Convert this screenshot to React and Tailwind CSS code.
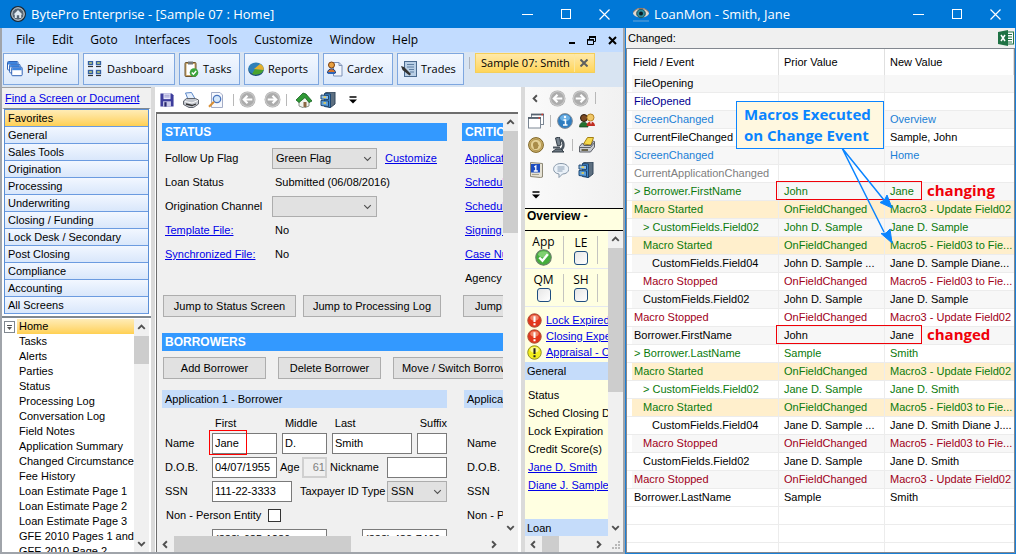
import { useState } from "react";

const ui = "font-['Liberation_Sans',Arial,sans-serif]";
const segoe = "font-['Open_Sans','Noto_Sans',sans-serif]";

const menus = ["File", "Edit", "Goto", "Interfaces", "Tools", "Customize", "Window", "Help"];

const categories = [
    "Favorites",
    "General",
    "Sales Tools",
    "Origination",
    "Processing",
    "Underwriting",
    "Closing / Funding",
    "Lock Desk / Secondary",
    "Post Closing",
    "Compliance",
    "Accounting",
    "All Screens",
];

const screens = [
    "Home",
    "Tasks",
    "Alerts",
    "Parties",
    "Status",
    "Processing Log",
    "Conversation Log",
    "Field Notes",
    "Application Summary",
    "Changed Circumstance",
    "Fee History",
    "Loan Estimate Page 1",
    "Loan Estimate Page 2",
    "Loan Estimate Page 3",
    "GFE 2010 Pages 1 and",
    "GFE 2010 Page 2",
];

// [indent, tone, field, prior, next]
const events = [
    [0, "black", "FileOpening", "", ""],
    [0, "navy", "FileOpened", "", ""],
    [0, "blue", "ScreenChanged", "", "Overview"],
    [0, "black", "CurrentFileChanged", "", "Sample, John"],
    [0, "blue", "ScreenChanged", "", "Home"],
    [0, "gray", "CurrentApplicationChanged", "", ""],
    [0, "green", "> Borrower.FirstName", "John", "Jane"],
    [0, "macro", "Macro Started", "OnFieldChanged", "Macro3 - Update Field02"],
    [1, "green", "> CustomFields.Field02", "John D. Sample", "Jane D. Sample"],
    [1, "macro", "Macro Started", "OnFieldChanged", "Macro5 - Field03 to Fie..."],
    [2, "black", "CustomFields.Field04", "John D. Sample ...", "Jane D. Sample Diane..."],
    [1, "red", "Macro Stopped", "OnFieldChanged", "Macro5 - Field03 to Fie..."],
    [1, "black", "CustomFields.Field02", "John D. Sample", "Jane D. Sample"],
    [0, "red", "Macro Stopped", "OnFieldChanged", "Macro3 - Update Field02"],
    [0, "black", "Borrower.FirstName", "John", "Jane"],
    [0, "green", "> Borrower.LastName", "Sample", "Smith"],
    [0, "macro", "Macro Started", "OnFieldChanged", "Macro3 - Update Field02"],
    [1, "green", "> CustomFields.Field02", "Jane D. Sample", "Jane D. Smith"],
    [1, "macro", "Macro Started", "OnFieldChanged", "Macro5 - Field03 to Fie..."],
    [2, "black", "CustomFields.Field04", "Jane D. Sample ...", "Jane D. Smith Diane J...."],
    [1, "red", "Macro Stopped", "OnFieldChanged", "Macro5 - Field03 to Fie..."],
    [1, "black", "CustomFields.Field02", "Jane D. Sample", "Jane D. Smith"],
    [0, "red", "Macro Stopped", "OnFieldChanged", "Macro3 - Update Field02"],
    [0, "black", "Borrower.LastName", "Sample", "Smith"],
    [0, "blank", "", "", ""],
    [0, "blank", "", "", ""],
    [0, "blank", "", "", ""],
];

const tones = {
    black: "text-black",
    navy: "text-[#000090]",
    blue: "text-[#1a7fd6]",
    gray: "text-[#808080]",
    green: "text-[#0b7a0b]",
    macro: "text-[#0b7a0b]",
    red: "text-[#a00018]",
    blank: "",
};

const indents = ["pl-[2px]", "pl-[11px]", "pl-[20px]"];

/* ---------- Icons ---------- */

function Svg({ size = 16, children }) {
    return (
        <svg width={size} height={size} viewBox="0 0 16 16" fill="none" className="shrink-0" aria-hidden="true">
            {children}
        </svg>
    );
}

function AppIcon() {
    return (
        <Svg>
            <circle cx="8" cy="8" r="7.4" fill="#566573" stroke="#1c2833" strokeWidth="1.2" />
            <circle cx="8" cy="8" r="6.2" stroke="#cfd8dc" strokeWidth="1" />
            <path d="M3.5 8.5 8 4l4.5 4.5h-1.3V12H9.2V9.2H6.8V12h-2V8.5z" fill="#dfeaf2" />
        </Svg>
    );
}

function EyeIcon() {
    return (
        <Svg>
            <path d="M0 7.5C2 0 14 0 16 7.500 14 13 2 13 0 7.500z" fill="#e4d9cd" />
            <circle cx="8" cy="7.500" r="4.300" fill="#2c8a9c" stroke="#1b4f5c" />
            <circle cx="8" cy="7.500" r="2" fill="#081c24" />
            <path d="M0 6.500C3 1 13 1 16 6.500" stroke="#8d6f5c" strokeWidth="1" />
            <path d="M0 15h16" stroke="#6ba6d8" />
        </Svg>
    );
}

function PipelineIcon() {
    return (
        <Svg>
            {[0, 3, 6].map((o) => (
                <g key={o}>
                    <rect x={0.5 + o * 0.7} y={0.5 + o * 0.95} width="10.500" height="8.500" rx="1" fill="#fff" stroke="#2f62b5" />
                    <rect x={1 + o * 0.7} y={1 + o * 0.95} width="9.500" height="2.500" fill="#3f86e0" />
                </g>
            ))}
        </Svg>
    );
}

function DashboardIcon() {
    return (
        <Svg>
            {[2, 10].map((x) =>
                [0, 9].map((y) => (
                    <g key={x + "-" + y}>
                        <rect x={x - 0.5} y={y + 0.5} width="4" height="3" fill="#b9c77a" stroke="#345fa0" strokeWidth="1.300" />
                        <path d={`M${x - 1} ${y + 5.5}h5`} stroke="#333" strokeWidth="1.200" />
                    </g>
                ))
            )}
        </Svg>
    );
}

function TasksIcon() {
    return (
        <Svg>
            <rect x="2" y="1.500" width="11" height="14" rx="1" fill="#c8a468" stroke="#6b5430" />
            <rect x="3.500" y="3" width="8" height="11" fill="#fff" />
            <rect x="5" y="0.500" width="5" height="3" fill="#777" />
            <circle cx="11" cy="11.500" r="4.300" fill="#3da53d" />
            <path d="m8.800 11.500 1.600 1.700 2.800-3.200" stroke="#fff" strokeWidth="1.400" />
        </Svg>
    );
}

function ReportsIcon() {
    return (
        <Svg>
            <ellipse cx="8" cy="9" rx="7.700" ry="6" fill="#1c4c78" />
            <ellipse cx="8" cy="7.500" rx="7.700" ry="6" fill="#2f7fb8" />
            <path d="M7 8 4 13c3.500 1.500 10 .5 11.500-4z" fill="#4aa32c" />
            <path d="m6 8 9.500 1c1-2-1-5-3.500-6z" fill="#e3b02c" />
        </Svg>
    );
}

function CardexIcon() {
    return (
        <Svg>
            <path d="M6.500 1.500h5.500l3 3v10.500h-8.500z" fill="#f2f6fc" stroke="#7f93b8" />
            <path d="M12 1.500v3h3" stroke="#7f93b8" />
            <circle cx="4.500" cy="4" r="3" fill="#e8a040" stroke="#7c3f10" />
            <path d="M0.500 12c0-5.500 8-5.500 8 0z" fill="#d8752a" stroke="#1d3c78" />
            <path d="M1 12h7" stroke="#2f66b8" strokeWidth="2" />
        </Svg>
    );
}

function TradesIcon() {
    return (
        <Svg>
            <rect x="3.500" y="0.500" width="12" height="15" fill="#b9cfe6" stroke="#4b6a8e" />
            <path d="M6 3.500h7M6 6h7M8 8.500h5M9 11h4" stroke="#5f7fa2" />
            <path d="m0 5 3 1 7 7-1.500 1.500L1.500 9z" fill="#333" />
        </Svg>
    );
}

function SaveIcon() {
    return (
        <Svg size={14}>
            <path d="M0.500 0.500h13l2 2v13h-15z" fill="#3d3d9c" />
            <rect x="4" y="0.500" width="8" height="6.500" fill="#e8e8fa" />
            <path d="M5 2.500h6M5 4.500h6" stroke="#8a8ac8" />
            <rect x="3.500" y="9.500" width="9" height="6" fill="#c8c8e8" />
            <rect x="5" y="10.500" width="2.500" height="5" fill="#26266c" />
        </Svg>
    );
}

function PrinterIcon() {
    return (
        <Svg>
            <path d="m2.500 1 6-.5 4 7-7 1z" fill="#e6f0fd" stroke="#5c88c8" />
            <path d="m0.500 9 3-2.500h9l3 1.500v4l-5 3.500H6l-5.500-3z" fill="#c3c7ce" stroke="#60656e" />
            <path d="M2 9.500 9 11l6-2.500" stroke="#fafafa" />
            <path d="m3 12 6 1.500 4-1.500" stroke="#333" strokeWidth="1.300" />
        </Svg>
    );
}

function PreviewIcon() {
    return (
        <Svg>
            <path d="M3.500 0.500h8.500l2.500 2.500v12.500h-11z" fill="#f6f8fd" stroke="#a3acc6" />
            <circle cx="9" cy="7" r="3.700" fill="#d5e8fb" stroke="#4b75bd" strokeWidth="1.300" />
            <path d="m6 9.800-5 5" stroke="#d89038" strokeWidth="2.200" />
        </Svg>
    );
}

function RoundArrow({ flip }) {
    return (
        <Svg size={17}>
            <circle cx="8" cy="8" r="7.500" fill="#acacac" />
            <circle cx="8" cy="8" r="6.600" stroke="#c9c9c9" />
            <path
                d={flip ? "M3.500 8h8M8 4.500 11.500 8 8 11.500" : "M12.500 8h-8M8 4.500 4.500 8 8 11.500"}
                stroke="#fff"
                strokeWidth="2"
            />
        </Svg>
    );
}

function HouseIcon() {
    return (
        <Svg>
            <path d="M3 8v6l5 2 5-2V8L8 4z" fill="#f1f5ef" stroke="#8a938a" />
            <path d="M0 8 7 1l3 1 6 7-3 1.500-4-5-6 5z" fill="#2f9a36" stroke="#166020" strokeWidth="0.800" />
            <rect x="7.500" y="10" width="3" height="5" fill="#8c6844" />
        </Svg>
    );
}

function CabinetIcon() {
    return (
        <Svg>
            <path d="m5 1 4-1h6v12l-4.500 3.500H9z" fill="#5d6f80" stroke="#33475a" />
            <path d="m4.500 1.500 6 .5v13.500l-6-1z" fill="#3f86c8" stroke="#1e4670" />
            <path d="m1 3 7.500.5v4L1 7z" fill="#8cc0ee" stroke="#1e4670" />
            <path d="m1 8.500 7.500.5v5.500L1 13.500z" fill="#5ba0de" stroke="#1e4670" />
            <path d="M3.500 5.200h2.500M3.500 11h2.500" stroke="#f0cf4c" strokeWidth="1.400" />
        </Svg>
    );
}

function WindowsIcon() {
    return (
        <Svg>
            <rect x="3.500" y="1.500" width="12" height="10" fill="#fff" stroke="#7c8794" />
            <path d="M3 1.500h13" stroke="#55616e" strokeWidth="1.800" />
            <rect x="0.500" y="4.500" width="12" height="10.500" fill="#fff" stroke="#7c8794" />
            <path d="M0 5h13" stroke="#55616e" strokeWidth="1.800" />
            <path d="M13.500 1.500h1.500M10.500 5h1.500" stroke="#e03b2c" strokeWidth="1.500" />
        </Svg>
    );
}

function InfoIcon() {
    return (
        <Svg>
            <circle cx="8" cy="8" r="7.400" fill="#2f7dc0" stroke="#878f98" />
            <ellipse cx="8" cy="5" rx="5" ry="3.300" fill="#6bb0e4" />
            <path d="M6.500 7h2v5M6 12h4.500" stroke="#fff" strokeWidth="1.500" />
            <circle cx="8" cy="4" r="1.200" fill="#fff" />
        </Svg>
    );
}

function PeopleIcon() {
    return (
        <Svg>
            <circle cx="5" cy="5" r="3.500" fill="#7c4a22" stroke="#2a1a0c" />
            <path d="M0.500 14c0-6.500 8.500-6.500 8.500 0z" fill="#23722f" stroke="#123f1a" strokeWidth="0.700" />
            <circle cx="11.500" cy="4.500" r="3.500" fill="#f0c766" stroke="#b58428" />
            <path d="M7.500 13c0-6 8.500-6 8.500 0z" fill="#c02d22" />
            <path d="M11 8.500h2l-1 3z" fill="#fff" />
        </Svg>
    );
}

function CoinIcon() {
    return (
        <Svg>
            <circle cx="8" cy="8" r="7.400" fill="#cdb069" stroke="#7d6425" />
            <circle cx="8" cy="8" r="5.600" fill="#e5d196" stroke="#a68a42" strokeWidth="0.700" />
            <path d="M6 12c0-2-1.500-3-1-5 .6-3 5-3 5 0l1 2-1 .5v1.500l-1.500 1z" fill="#a98c48" />
        </Svg>
    );
}

function MicroscopeIcon() {
    return (
        <Svg>
            <path d="m5.500 1 4-1 1.500 8-3.500 1z" fill="#77838e" stroke="#343e47" />
            <path d="M10.500 2.500c4 2 4 8.500 0 10.500" stroke="#4a545e" strokeWidth="2.400" />
            <path d="M3 10.500h7" stroke="#4a545e" strokeWidth="2" />
            <path d="M2 15h12l-3-3H6z" fill="#69757f" stroke="#343e47" />
        </Svg>
    );
}

function FaxIcon() {
    return (
        <Svg>
            <path d="m4.500 7 4-6.500h6L12 8z" fill="#f5d94c" stroke="#a37e14" />
            <path d="m0.500 9.500 3-3.500 1.500 2.500h7l2.500-4.500 1 .5v5.500l-4 5H0.500z" fill="#c9ccd1" stroke="#5c6068" />
            <path d="M1 10.500h10.500l4-5" stroke="#5c6068" />
            <path d="M2.500 13h6.500" stroke="#4d4420" strokeWidth="1.500" />
        </Svg>
    );
}

function CalendarIcon() {
    return (
        <Svg>
            <path d="m2.500 0.500 12 1v13.500l-2 .5-10-1z" fill="#e6e2d4" stroke="#8d8876" />
            <rect x="3" y="2" width="9" height="8.500" fill="#1d4cc0" />
            <path d="m6.300 5 1.500-1v5M5.800 9h4" stroke="#fff" strokeWidth="1.300" />
            <path d="M4 12.500h7" stroke="#aaa48e" />
        </Svg>
    );
}

function ChatIcon() {
    return (
        <Svg>
            <path d="M8 1.500c10 0 10 10.500 1.500 10.500L6 15.500V12C-2 11-1 1.500 8 1.500z" fill="#eaf1f8" stroke="#8797a8" />
            <path d="M4.500 5h7M4.500 7h7M4.500 9h5" stroke="#8da0b4" />
        </Svg>
    );
}

function ExcelIcon() {
    return (
        <Svg>
            <rect x="8" y="2" width="7.500" height="12" fill="#fff" stroke="#1f7244" />
            <path d="M10 4.500h4M10 7h4M10 9.500h4M10 12h4" stroke="#1f7244" strokeWidth="1.200" />
            <path d="M0 2 10 0v16L0 14z" fill="#1f7244" />
            <path d="m3 5 4 6M7 5l-4 6" stroke="#fff" strokeWidth="1.500" />
        </Svg>
    );
}

function AlertIcon({ warn }) {
    return (
        <Svg size={15}>
            <circle cx="8" cy="8" r="7.200" fill={warn ? "#f2ee1c" : "#e2371c"} stroke={warn ? "#8b8820" : "#a8523c"} />
            <ellipse cx="8" cy="5" rx="4.500" ry="3" fill={warn ? "#fbfa90" : "#f08468"} />
            <path d="M8 3.500v6M8 11v2" stroke={warn ? "#222" : "#fff"} strokeWidth="2.200" />
        </Svg>
    );
}

function CheckIcon() {
    return (
        <Svg size={17}>
            <circle cx="8" cy="8" r="7.300" fill="#45ad3c" stroke="#6c7f6c" />
            <ellipse cx="8" cy="5" rx="5" ry="3" fill="#7fd070" />
            <path d="m4 8 3 3 5-6" stroke="#fff" strokeWidth="2.200" />
        </Svg>
    );
}

const chevrons = {
    up: "m4.500 9.500 3.500-3.500 3.500 3.500",
    down: "m4.500 6.500 3.500 3.500 3.500-3.500",
    left: "m9.500 4.500-3.500 3.500 3.500 3.500",
    right: "m6.500 4.500 3.500 3.500-3.500 3.500",
};

function Chevron({ dir, thin }) {
    return (
        <Svg size={15}>
            <path d={chevrons[dir]} stroke="#505050" strokeWidth={thin ? 1.2 : 2} />
        </Svg>
    );
}

function Overflow() {
    return (
        <svg width="8" height="8" viewBox="0 0 8 8" aria-hidden="true">
            <path d="M0.500 1h7" stroke="#000" strokeWidth="1.500" />
            <path d="M0 3.500h8l-4 4z" fill="#000" />
        </svg>
    );
}

/* ---------- Shared pieces ---------- */

function Separator() {
    return <span className="h-3 w-px bg-[#b8b8b8]" />;
}

function IconButton({ label, children }) {
    return (
        <button type="button" aria-label={label} className="flex items-center justify-center">
            {children}
        </button>
    );
}

function Link({ children }) {
    return (
        <a href="#" className="whitespace-nowrap text-[#0000e8] underline">
            {children}
        </a>
    );
}

function VScroll({ thumb }) {
    return (
        <div className="flex w-[15px] shrink-0 flex-col bg-[#f0f0f0]">
            <div className="flex h-[17px] items-center">
                <Chevron dir="up" />
            </div>
            <div className={"bg-[#cdcdcd] " + thumb} />
            <div className="flex-1" />
            <div className="flex h-[17px] items-center">
                <Chevron dir="down" />
            </div>
        </div>
    );
}

function HScroll({ thumb, children }) {
    return (
        <div className="flex h-4 shrink-0 items-center bg-[#f0f0f0]">
            <div className="flex w-[17px] justify-center">
                <Chevron dir="left" />
            </div>
            <div className={"h-full bg-[#cdcdcd] " + thumb} />
            <div className="flex-1" />
            <div className="flex w-[19px] justify-center">
                <Chevron dir="right" />
            </div>
            {children}
        </div>
    );
}

function WindowButtons() {
    return (
        <div className="ml-auto flex items-center gap-7 pr-[15px] text-white">
            <button type="button" aria-label="Minimize" className="flex h-3 w-[11px] items-center">
                <span className="h-px w-full bg-white" />
            </button>
            <button type="button" aria-label="Maximize" className="h-[10px] w-[10px] border border-white" />
            <button type="button" aria-label="Close">
                <svg width="11" height="11" viewBox="0 0 11 11" aria-hidden="true">
                    <path d="m0.500 0.500 10 10M10.500 0.500l-10 10" stroke="#fff" strokeWidth="1.200" />
                </svg>
            </button>
        </div>
    );
}

function PushButton({ width, children }) {
    return (
        <button
            type="button"
            className={"h-[22px] shrink-0 whitespace-nowrap border border-[#adadad] bg-[#e1e1e1] text-center " + width}
        >
            {children}
        </button>
    );
}

function TextBox({ label, width, value = "", id }) {
    return (
        <input
            id={id}
            type="text"
            aria-label={label}
            defaultValue={value}
            className={"h-[21px] shrink-0 border border-[#7a7a7a] bg-white px-[2px] text-black outline-none " + width}
        />
    );
}

function Combo({ id, label, width, options }) {
    return (
        <span className={"relative h-[21px] shrink-0 " + width}>
            <select
                id={id}
                aria-label={label}
                className="h-full w-full appearance-none border border-[#adadad] bg-[#e1e1e1] pl-[3px] outline-none"
            >
                {options.map((o) => (
                    <option key={o}>{o}</option>
                ))}
            </select>
            <span className="pointer-events-none absolute right-0.5 top-[3px]">
                <Chevron dir="down" thin />
            </span>
        </span>
    );
}

/* ---------- BytePro window ---------- */

const modules = [
    ["Pipeline", PipelineIcon, "w-[76px]"],
    ["Dashboard", DashboardIcon, "w-[92px]"],
    ["Tasks", TasksIcon, "w-[61px]"],
    ["Reports", ReportsIcon, "w-[75px]"],
    ["Cardex", CardexIcon, "w-[70px]"],
    ["Trades", TradesIcon, "w-[67px]"],
];

function MenuBar() {
    return (
        <nav className={"flex h-6 shrink-0 items-center gap-[17px] bg-[#c2dcff] pl-[14px] text-[12px] " + segoe}>
            {menus.map((m) => (
                <button key={m} type="button">
                    {m}
                </button>
            ))}
            <div className="ml-auto flex items-center gap-3 pr-[6px]">
                <button type="button" aria-label="Minimize document" className="flex h-2 w-[6px] items-end">
                    <span className="h-0.5 w-full bg-black" />
                </button>
                <button type="button" aria-label="Restore document">
                    <svg width="9" height="9" viewBox="0 0 9 9" fill="none" stroke="#000" aria-hidden="true">
                        <path d="M2.500 3V.5h6v5H6.500" />
                        <path d="M2 1h7" strokeWidth="2" />
                        <path d="M.5 3.500h6v5h-6z" />
                        <path d="M0 4h7" strokeWidth="1.500" />
                    </svg>
                </button>
                <button type="button" aria-label="Close document">
                    <svg width="9" height="9" viewBox="0 0 9 9" aria-hidden="true">
                        <path d="m1 1 7 7M8 1 1 8" stroke="#000" strokeWidth="2" />
                    </svg>
                </button>
            </div>
        </nav>
    );
}

function ModuleBar() {
    return (
        <div className={"flex h-[35px] shrink-0 items-start gap-1 bg-[#d8e4f2] pl-px pt-px text-[11px] " + segoe}>
            {modules.map(([name, Icon, width]) => (
                <button
                    key={name}
                    type="button"
                    className={
                        "flex h-8 shrink-0 items-center gap-1 border border-[#7ea7e0] bg-gradient-to-b from-[#f3f8ff] to-[#dbe9fb] pl-[3px] " +
                        width
                    }
                >
                    <Icon />
                    {name}
                </button>
            ))}
            <span className="mx-px mt-1 h-3 w-px bg-[#b0b6c0]" />
            <div className="flex h-5 shrink-0 items-center border border-[#f5cf5a] bg-gradient-to-b from-[#ffe9a8] to-[#ffd558]">
                <span className="whitespace-nowrap pl-[5px] pr-1">Sample 07: Smith</span>
                <button
                    type="button"
                    aria-label="Close tab"
                    className="flex h-full w-5 items-center justify-center border-l border-[#fbe7a0]"
                >
                    <svg width="8" height="8" viewBox="0 0 8 8" aria-hidden="true">
                        <path d="m0.500 0.500 7 7M7.500 0.500l-7 7" stroke="#5f5f5f" strokeWidth="2" />
                    </svg>
                </button>
            </div>
        </div>
    );
}

function Sidebar() {
    const [active, setActive] = useState("Favorites");
    return (
        <aside className="flex w-[149px] shrink-0 flex-col border-t border-[#a0a0a0] bg-[#f0f0f0]">
            <div className="flex h-5 shrink-0 items-center pl-[3px]">
                <Link>Find a Screen or Document</Link>
            </div>
            <div className="border-2 border-t border-white border-t-[#808890] bg-white">
                <ul className="border-x border-t border-[#5b8fd6]">
                    {categories.map((c) => (
                        <li key={c}>
                            <button
                                type="button"
                                onClick={() => setActive(c)}
                                className={
                                    "flex h-[17px] w-full items-center border-b border-[#6b9be0] bg-gradient-to-b pl-[3px] " +
                                    (c === active ? "from-[#ffecb5] to-[#ffd050]" : "from-[#f2f7ff] to-[#d9e7fb]")
                                }
                            >
                                {c}
                            </button>
                        </li>
                    ))}
                </ul>
            </div>
            <div className="flex min-h-0 flex-1 border-t-2 border-[#808890] bg-white pr-0.5 pt-px">
                <button
                    type="button"
                    aria-label="Collapse"
                    className="ml-0.5 mt-0.5 flex h-3 w-[11px] shrink-0 items-center justify-center border border-[#808890]"
                >
                    <svg width="5" height="5" viewBox="0 0 5 5" aria-hidden="true">
                        <path d="M0 .5h5" stroke="#555" />
                        <path d="M0 2h5L2.500 5z" fill="#555" />
                    </svg>
                </button>
                <ul className="ml-0.5 min-w-0 flex-1 overflow-hidden">
                    {screens.map((s, i) => (
                        <li
                            key={s}
                            className={
                                "h-[15px] whitespace-nowrap pl-[2px] leading-[15px] " +
                                (i === 0 ? "bg-gradient-to-b from-[#ffecb5] to-[#ffd050]" : "")
                            }
                        >
                            {s}
                        </li>
                    ))}
                </ul>
                <VScroll thumb="h-7" />
            </div>
        </aside>
    );
}

function SectionBar({ children }) {
    return <h2 className="h-[18px] bg-[#3399ff] pl-[3px] text-[12px] font-bold leading-[18px] text-white">{children}</h2>;
}

function StatusColumn() {
    return (
        <section className="w-[285px] shrink-0">
            <SectionBar>STATUS</SectionBar>
            <div className="mt-[5px] pb-[29px]">
                <div className="flex h-6 items-center">
                    <label htmlFor="flag" className="w-[110px] pl-[3px]">
                        Follow Up Flag
                    </label>
                    <Combo id="flag" width="w-[105px]" options={["Green Flag"]} />
                    <span className="ml-2">
                        <Link>Customize</Link>
                    </span>
                </div>
                <div className="flex h-6 items-center">
                    <span className="w-[113px] pl-[3px]">Loan Status</span>
                    <span>Submitted (06/08/2016)</span>
                </div>
                <div className="flex h-6 items-center">
                    <label htmlFor="channel" className="w-[110px] pl-[3px]">
                        Origination Channel
                    </label>
                    <Combo id="channel" width="w-[105px]" options={[""]} />
                </div>
                <div className="flex h-6 items-center">
                    <span className="w-[113px] pl-[3px]">
                        <Link>Template File:</Link>
                    </span>
                    <span>No</span>
                </div>
                <div className="flex h-6 items-center">
                    <span className="w-[113px] pl-[3px]">
                        <Link>Synchronized File:</Link>
                    </span>
                    <span>No</span>
                </div>
            </div>
            <div className="flex gap-[7px] pl-px">
                <PushButton width="w-[133px]">Jump to Status Screen</PushButton>
                <PushButton width="w-[138px]">Jump to Processing Log</PushButton>
            </div>
        </section>
    );
}

function CriticalColumn() {
    return (
        <section className="w-[285px] shrink-0">
            <SectionBar>CRITICAL DATES</SectionBar>
            <div className="mt-[5px] pb-[5px] pl-[3px]">
                {["Application Date", "Scheduled Closing", "Scheduled Funding", "Signing Date", "Case Number"].map((t) => (
                    <div key={t} className="flex h-6 items-center">
                        <Link>{t}</Link>
                    </div>
                ))}
                <div className="flex h-6 items-center">Agency Case</div>
            </div>
            <div className="pl-px">
                <PushButton width="w-[133px]">Jump to Dates Screen</PushButton>
            </div>
        </section>
    );
}

function BorrowerForm() {
    return (
        <section className="w-[285px] shrink-0">
            <h3 className="h-[18px] bg-[#c5dcfa] pl-[3px] leading-[18px]">Application 1 - Borrower</h3>
            <div className="mt-[7px] flex h-4 items-center pl-[53px]">
                <label htmlFor="first" className="w-[70px]">First</label>
                <label htmlFor="middle" className="w-[50px]">Middle</label>
                <label htmlFor="last" className="w-[85px]">Last</label>
                <label htmlFor="suffix">Suffix</label>
            </div>
            <div className="relative flex h-6 items-center gap-[5px]">
                <span className="w-[45px] pl-[3px]">Name</span>
                <TextBox id="first" width="w-[65px]" value="Jane" />
                <TextBox id="middle" width="w-[45px]" value="D." />
                <TextBox id="last" width="w-[80px]" value="Smith" />
                <TextBox id="suffix" width="w-[30px]" />
                <span className="pointer-events-none absolute -top-px left-[47px] h-[25px] w-[38px] border border-[#ff0000]" />
            </div>
            <div className="flex h-6 items-center">
                <label htmlFor="dob" className="w-[50px] pl-[3px]">D.O.B.</label>
                <TextBox id="dob" width="w-[65px]" value="04/07/1955" />
                <label htmlFor="age" className="w-[25px] pl-[3px]">Age</label>
                <input
                    id="age"
                    type="text"
                    disabled
                    defaultValue="61"
                    className="h-[21px] w-[25px] border-2 border-[#d0d0d0] bg-[#f0f0f0] text-right text-[#808080]"
                />
                <label htmlFor="nickname" className="w-[60px] pl-[3px]">Nickname</label>
                <TextBox id="nickname" width="w-[60px]" />
            </div>
            <div className="flex h-6 items-center">
                <label htmlFor="ssn" className="w-[50px] pl-[3px]">SSN</label>
                <TextBox id="ssn" width="w-[80px]" value="111-22-3333" />
                <label htmlFor="taxid" className="w-[95px] whitespace-nowrap pl-2">Taxpayer ID Type</label>
                <Combo id="taxid" width="w-[60px]" options={["SSN"]} />
            </div>
            <div className="flex h-6 items-center">
                <label htmlFor="entity" className="w-[106px] pl-1">Non - Person Entity</label>
                <input id="entity" type="checkbox" className="h-[13px] w-[13px] appearance-none border border-[#333] bg-white" />
            </div>
            <div className="flex h-6 items-center justify-between pl-[50px]">
                <TextBox label="Home phone" width="w-[115px]" value="(333) 685-1286" />
                <TextBox label="Work phone" width="w-[85px]" value="(333) 488-7466" />
            </div>
        </section>
    );
}

function MainPane() {
    return (
        <main className="flex min-w-0 flex-1 flex-col bg-white">
            <div className="flex h-[25px] shrink-0 items-center gap-[9px] pl-[5px]">
                <IconButton label="Save"><SaveIcon /></IconButton>
                <IconButton label="Print"><PrinterIcon /></IconButton>
                <IconButton label="Print preview"><PreviewIcon /></IconButton>
                <Separator />
                <div className="-mx-1 flex gap-2">
                    <IconButton label="Back"><RoundArrow /></IconButton>
                    <IconButton label="Forward"><RoundArrow flip /></IconButton>
                </div>
                <Separator />
                <div className="flex gap-2">
                    <IconButton label="Home"><HouseIcon /></IconButton>
                    <IconButton label="File cabinet"><CabinetIcon /></IconButton>
                </div>
                <span className="ml-1"><Overflow /></span>
            </div>
            <div className="ml-px mr-[3px] flex min-h-0 flex-1 flex-col border-l border-t-2 border-[#6e6e6e] bg-[#f0f0f0]">
                <div className="flex min-h-0 flex-1">
                    <div className="min-w-0 flex-1 overflow-hidden pl-[5px] pt-[9px]">
                        <div className="flex gap-[15px]">
                            <StatusColumn />
                            <CriticalColumn />
                        </div>
                        <div className="mt-4">
                            <SectionBar>BORROWERS</SectionBar>
                        </div>
                        <div className="mt-[6px] flex gap-3 pl-px">
                            <PushButton width="w-[103px]">Add Borrower</PushButton>
                            <PushButton width="w-[103px]">Delete Borrower</PushButton>
                            <PushButton width="w-[134px]">Move / Switch Borrower</PushButton>
                        </div>
                        <div className="mt-[11px] flex gap-[17px]">
                            <BorrowerForm />
                            <section className="w-[285px] shrink-0">
                                <h3 className="h-[18px] bg-[#c5dcfa] pl-[3px] leading-[18px]">Application 1 - Coborrower</h3>
                                <div className="mt-[23px] pl-[3px] leading-6">
                                    <p>Name</p>
                                    <p>D.O.B.</p>
                                    <p>SSN</p>
                                    <p>Non - Person Entity</p>
                                </div>
                            </section>
                        </div>
                    </div>
                    <VScroll thumb="h-[102px]" />
                </div>
                <div className="flex">
                    <div className="min-w-0 flex-1">
                        <HScroll thumb="w-[177px]" />
                    </div>
                    <div className="w-[15px]" />
                </div>
            </div>
        </main>
    );
}

const alerts = [
    ["Lock Expired", false],
    ["Closing Expected", false],
    ["Appraisal - Come due", true],
];

function Flag({ name, checked, width }) {
    return (
        <label className={"flex shrink-0 flex-col items-center text-[12px] leading-[14px] " + width + " " + segoe}>
            {name}
            {checked ? (
                <CheckIcon />
            ) : (
                <input
                    type="checkbox"
                    className="mt-px h-[14px] w-[14px] appearance-none rounded-[3px] border border-[#1f4e80] bg-gradient-to-br from-[#e6e6e6] to-white"
                />
            )}
        </label>
    );
}

function OverviewPane() {
    return (
        <aside className="flex w-[98px] shrink-0 flex-col bg-[#ffffe1]">
            <div className="flex h-[121px] shrink-0 flex-col bg-gradient-to-r from-[#fafafa] to-[#f1f1f1] pl-[3px]">
                <div className="flex h-[22px] items-center gap-[6px]">
                    <IconButton label="Collapse panel"><Chevron dir="left" /></IconButton>
                    <IconButton label="Back"><RoundArrow /></IconButton>
                    <IconButton label="Forward"><RoundArrow flip /></IconButton>
                    <Separator />
                </div>
                <div className="flex h-6 items-center gap-[6px]">
                    <IconButton label="Windows"><WindowsIcon /></IconButton>
                    <Separator />
                    <IconButton label="Information"><InfoIcon /></IconButton>
                    <IconButton label="Contacts"><PeopleIcon /></IconButton>
                </div>
                <div className="flex h-6 items-center gap-[6px]">
                    <IconButton label="Fees"><CoinIcon /></IconButton>
                    <IconButton label="Inspect"><MicroscopeIcon /></IconButton>
                    <Separator />
                    <IconButton label="Fax"><FaxIcon /></IconButton>
                </div>
                <div className="flex h-[26px] items-center gap-[9px]">
                    <IconButton label="Calendar"><CalendarIcon /></IconButton>
                    <IconButton label="Conversation"><ChatIcon /></IconButton>
                    <IconButton label="Cabinet"><CabinetIcon /></IconButton>
                </div>
                <div className="flex h-6 items-center pl-1">
                    <Overflow />
                </div>
            </div>
            <h2 className="h-[23px] shrink-0 border-y border-black pl-[2px] text-[12px] font-bold leading-[14px]">Overview -</h2>
            <div className="flex min-h-0 flex-1">
                <div className="min-w-0 flex-1 overflow-hidden">
                    <div className="flex h-[38px] items-center border-b border-[#e4e8f0] pt-px">
                        <Flag name="App" checked width="w-[37px]" />
                        <span className="mx-px h-7 w-px bg-[#c4c4c0]" />
                        <Flag name="LE" width="w-8" />
                        <span className="h-7 w-px bg-[#c4c4c0]" />
                    </div>
                    <div className="flex h-[38px] items-center border-b border-[#e4e8f0]">
                        <Flag name="QM" width="w-[37px]" />
                        <span className="mx-px h-7 w-px bg-[#c4c4c0]" />
                        <Flag name="SH" width="w-8" />
                        <span className="h-7 w-px bg-[#c4c4c0]" />
                    </div>
                    <ul className="pb-[2px] pt-[5px]">
                        {alerts.map(([text, warn]) => (
                            <li key={text} className="flex h-4 items-center gap-1 pl-[2px]">
                                <AlertIcon warn={warn} />
                                <Link>{text}</Link>
                            </li>
                        ))}
                    </ul>
                    <h3 className="h-[18px] bg-[#c5dcfa] pl-[2px] leading-[18px]">General</h3>
                    <div className="mt-[6px] whitespace-nowrap pl-[3px] leading-[18px]">
                        <p>Status</p>
                        <p>Sched Closing Date</p>
                        <p>Lock Expiration</p>
                        <p>Credit Score(s)</p>
                        <p><Link>Jane D. Smith</Link></p>
                        <p><Link>Diane J. Sample</Link></p>
                    </div>
                    <h3 className="mt-[25px] h-[18px] bg-[#c5dcfa] pl-[2px] leading-[18px]">Loan</h3>
                </div>
                <VScroll thumb="h-[144px]" />
            </div>
            <HScroll thumb="w-[17px]">
                <svg width="15" height="15" viewBox="0 0 15 15" fill="#b8b8b8" aria-hidden="true">
                    <path d="M10 4h2v2h-2zM10 7h2v2h-2zM7 7h2v2H7zM10 10h2v2h-2zM7 10h2v2H7zM4 10h2v2H4z" />
                </svg>
            </HScroll>
        </aside>
    );
}

function ByteProWindow() {
    return (
        <div className="flex min-w-0 flex-1 flex-col overflow-hidden">
            <header className={"flex h-7 shrink-0 items-center bg-[#0078d7] pl-[10px] text-white " + segoe}>
                <AppIcon />
                <h1 className="whitespace-nowrap pl-[5px] text-[13px]">BytePro Enterprise - [Sample 07 : Home]</h1>
                <WindowButtons />
            </header>
            <div className="flex min-h-0 flex-1 flex-col border-x-2 border-b-2 border-[#a0a4aa]">
                <MenuBar />
                <ModuleBar />
                <div className="flex min-h-0 flex-1">
                    <Sidebar />
                    <div className="w-1 shrink-0 bg-[#dadada]" />
                    <MainPane />
                    <div className="w-1 shrink-0 bg-[#dadada]" />
                    <OverviewPane />
                </div>
            </div>
        </div>
    );
}

/* ---------- LoanMon window ---------- */

function rowFill(tone, i) {
    if (tone === "macro") return "bg-[#ffefcc]";
    if (tone === "blank") return "";
    return i % 2 === 0 ? "bg-[#f7f7f7]" : "";
}

function EventTable() {
    return (
        <table className="w-full table-fixed border-separate border-spacing-0 text-left">
            <colgroup>
                <col className="w-[152px]" />
                <col className="w-[106px]" />
                <col />
            </colgroup>
            <thead>
                <tr className="h-[26px]">
                    <th className="border-r border-[#e0e0e0] p-0 pl-[6px] font-normal">Field / Event</th>
                    <th className="border-r border-[#e0e0e0] p-0 pl-[5px] font-normal">Prior Value</th>
                    <th className="border-r border-[#e0e0e0] p-0 pl-[5px] font-normal">New Value</th>
                </tr>
            </thead>
            <tbody>
                {events.map(([indent, tone, field, prior, next], i) => (
                    <tr key={i} className={"h-[18px] whitespace-nowrap leading-[17px] " + tones[tone]}>
                        <td className="border-b border-r border-[#ececec] p-0 pl-[5px]">
                            <div className={"h-[17px] " + indents[indent] + " " + rowFill(tone, i)}>{field}</div>
                        </td>
                        <td className={"border-b border-r border-[#ececec] p-0 pl-[5px] " + rowFill(tone, i)}>{prior}</td>
                        <td className={"overflow-hidden border-b border-[#ececec] p-0 pl-[5px] " + rowFill(tone, i)}>{next}</td>
                    </tr>
                ))}
            </tbody>
        </table>
    );
}

function Annotations() {
    return (
        <div className={"pointer-events-none absolute inset-0 text-[15px] font-bold " + segoe}>
            <div className="absolute left-[151px] top-[181px] h-[19px] w-[146px] border border-[#f00008]" />
            <p className="absolute left-[302px] top-[180px] leading-5 text-[#f00008]">changing</p>
            <div className="absolute left-[151px] top-[325px] h-[19px] w-[146px] border border-[#f00008]" />
            <p className="absolute left-[302px] top-[324px] leading-5 text-[#f00008]">changed</p>
            <svg className="absolute left-[211px] top-[148px]" width="60" height="100" viewBox="0 0 60 100" aria-hidden="true">
                <path d="M6 0 48 52M6 0 48 84" stroke="#0a84ff" strokeWidth="1.500" />
                <path d="M56 60 44 54.500 48.500 52 51 47z" fill="#0a84ff" stroke="#0a84ff" />
                <path d="M56 95 45 85.500 50 85 54 81z" fill="#0a84ff" stroke="#0a84ff" />
            </svg>
            <div className="absolute left-[111px] top-[101px] whitespace-nowrap border border-[#0a84ff] bg-[#fff8e0] py-0.5 pl-[7px] pr-3 leading-[21px] text-[#0a84ff]">
                Macros Executed
                <br />
                on Change Event
            </div>
        </div>
    );
}

function LoanMonWindow() {
    return (
        <div className="relative flex w-[391px] shrink-0 flex-col overflow-hidden">
            <header className={"flex h-7 shrink-0 items-center bg-[#0078d7] pl-2 text-white " + segoe}>
                <EyeIcon />
                <h1 className="whitespace-nowrap pl-[5px] text-[13px]">LoanMon - Smith, Jane</h1>
                <WindowButtons />
            </header>
            <div className="flex min-h-0 flex-1 flex-col border-x border-b border-[#1a7fd6] bg-[#f0f0f0]">
                <div className="flex h-5 shrink-0 items-center justify-between pl-[2px] pr-px">
                    <span>Changed:</span>
                    <IconButton label="Export to Excel"><ExcelIcon /></IconButton>
                </div>
                <div className="min-h-0 flex-1 overflow-hidden border border-[#82878f] bg-white">
                    <EventTable />
                </div>
            </div>
            <Annotations />
        </div>
    );
}

export default function App() {
    return (
        <div className={"flex h-screen overflow-hidden bg-[#f0f0f0] text-[11px] leading-[14px] text-black " + ui}>
            <ByteProWindow />
            <LoanMonWindow />
        </div>
    );
}
